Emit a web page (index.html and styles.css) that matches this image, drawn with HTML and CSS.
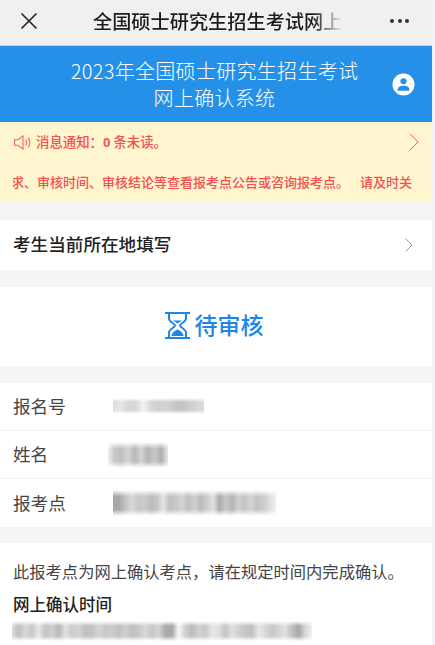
FILE: index.html
```html
<!DOCTYPE html>
<html lang="zh-CN">
<head>
<meta charset="utf-8">
<title>网上确认系统</title>
<link rel="stylesheet" href="styles.css">
</head>
<body>
<div class="page">
  <header class="topbar">
    <svg class="close" viewBox="0 0 18 18" width="18" height="18"><path d="M1.500 1.500 16.500 16.500M16.500 1.500 1.500 16.500" fill="none" stroke="#222" stroke-width="1.600"/></svg>
    <div class="toptitle">全国硕士研究生招生考试网上确认系统</div>
    <div class="dots"><i></i><i></i><i></i></div>
  </header>
  <section class="banner">
    <h1>2023年全国硕士研究生招生考试<br>网上确认系统</h1>
    <svg class="user" viewBox="0 0 24 24" width="23" height="23"><circle cx="12" cy="12" r="11.500" fill="#fff"/><circle cx="12" cy="8.600" r="3.200" fill="#2490e8"/><path d="M5.800 17.600c0-3 2.600-4.400 6.200-4.400s6.200 1.400 6.200 4.400c0 .7-.5 1-1.200 1H7c-.7 0-1.200-.3-1.200-1z" fill="#2490e8"/></svg>
  </section>
  <section class="notice">
    <div class="notice-top">
      <svg class="speaker" viewBox="0 0 20 16" width="20" height="15"><path d="M1 5h3.500L10 1v14L4.500 11H1z" fill="none" stroke="#f4605a" stroke-width="1.100"/><path d="M13 5c1.200 1.800 1.200 4.200 0 6M15.500 2.800c2.200 3.200 2.200 7.200 0 10.400" fill="none" stroke="#f4605a" stroke-width="1.100"/></svg>
      <span class="notice-text">消息通知：<b>0</b> 条未读。</span>
      <svg class="notice-arrow" viewBox="0 0 10 18" width="10" height="18"><path d="M1 .8 9 9 1 17.200" fill="none" stroke="#f4605a" stroke-width="1"/></svg>
    </div>
    <div class="marquee"><span>求、审核时间、审核结论等查看报考点公告或咨询报考点。 请及时关注</span></div>
  </section>
  <a class="row-link">
    <span>考生当前所在地填写</span>
    <svg viewBox="0 0 8 14" width="8" height="14"><path d="M.7.7 7 7 .7 13.300" fill="none" stroke="#999" stroke-width="1"/></svg>
  </a>
  <section class="status">
    <svg viewBox="0 0 25 27" width="25" height="27"><path d="M0 1h25M0 26h25" stroke="#1c87e5" stroke-width="1.800"/><path d="M4 1v5.500c0 3.500 6 5 6 7s-6 3.500-6 7V26M21 1v5.500c0 3.500-6 5-6 7s6 3.500 6 7V26" fill="none" stroke="#1c87e5" stroke-width="2"/><path d="M8 8.500h9l-4.500 3z" fill="#1c87e5"/><path d="M6.500 24c0-3 3.500-5.500 6-6.500 2.500 1 6 3.500 6 6.500z" fill="#1c87e5"/></svg>
    <span>待审核</span>
  </section>
  <section class="info">
    <div class="info-row"><span class="label">报名号</span><i class="mask mask-a"></i></div>
    <div class="info-row"><span class="label">姓名</span><i class="mask mask-b"></i></div>
    <div class="info-row"><span class="label">报考点</span><i class="mask mask-c"></i></div>
  </section>
  <section class="confirm">
    <p>此报考点为网上确认考点，请在规定时间内完成确认。</p>
    <h2>网上确认时间</h2>
    <i class="mask mask-d"></i>
  </section>
</div>
</body>
</html>
```
FILE: styles.css
```css
* { box-sizing: border-box; }
html, body { margin: 0; padding: 0; height: 100%; overflow: hidden; }
body { background: #f0f4fa; font-family: "Noto Sans CJK SC", "Noto Sans", sans-serif; }
.page { width: 432px; height: 645px; background: #f6f5f6; overflow: hidden; }

.topbar { height: 46px; background: #f0f0f0; border-bottom: 1px solid #c9d5df; display: flex; align-items: center; padding-left: 20px; }
.close { flex: none; margin-top: -4px; }
.toptitle { margin-left: 55px; width: 250px; white-space: nowrap; overflow: hidden; font-size: 19.200px; font-weight: 500; color: #1c1c1c; line-height: 26px; margin-top: -3px; -webkit-mask-image: linear-gradient(to right, #000 88%, transparent); mask-image: linear-gradient(to right, #000 88%, transparent); }
.dots { display: flex; gap: 3.500px; margin-left: 47px; margin-top: -3px; }
.dots i { width: 4px; height: 4px; border-radius: 50%; background: #333; }

.banner { height: 76px; background: #2490e8; display: flex; align-items: center; padding-left: 37px; padding-right: 17px; }
.banner h1 { flex: 1; margin: -1px 0 0; font-size: 20px; line-height: 27px; font-weight: 300; color: #fff; text-align: center; letter-spacing: .3px; }
.user { flex: none; }

.notice { height: 80px; background: #fff5cf; color: #f4504f; }
.notice-top { display: flex; align-items: center; height: 40px; padding: 0 14px 0 13px; }
.speaker { flex: none; }
.notice-text { margin-left: 3px; margin-top: -2px; font-size: 13.400px; font-weight: 500; flex: 1; }
.notice-text b { font-family: "Liberation Sans", sans-serif; font-weight: 700; }
.notice-arrow { flex: none; margin-right: -1px; }
.marquee { margin: 0 19px 0 13px; overflow: hidden; white-space: nowrap; font-size: 13px; font-weight: 500; line-height: 16px; padding-top: 12px; height: 40px; }
.marquee span { display: block; margin-left: -2px; word-spacing: 8px; }

.row-link { margin-top: 18px; height: 50px; background: #fff; display: flex; align-items: center; justify-content: space-between; padding: 0 19px 0 13px; color: #222; }
.row-link span { font-size: 17.600px; font-weight: 500; margin-top: -4px; }

.status { margin-top: 17px; height: 79px; background: #fff; display: flex; justify-content: center; align-items: center; gap: 5px; color: #1c87e5; padding-right: 4px; }
.status span { font-size: 23px; font-weight: 500; margin-top: -5px; }
.status svg { margin-top: -2px; }

.info { margin-top: 17px; background: #fff; }
.info-row { height: 48px; display: flex; align-items: center; padding-left: 13px; border-bottom: 1px solid #f0f0f0; }
.info-row:last-child { border-bottom: 0; }
.label { width: 100px; font-size: 17.600px; color: #444; margin-top: -2px; }

.mask { display: block; filter: blur(.6px); -webkit-mask-image: linear-gradient(to bottom, transparent, #000 25%, #000 75%, transparent); mask-image: linear-gradient(to bottom, transparent, #000 25%, #000 75%, transparent); }
.mask-a { width: 91px; height: 16px; margin-top: -2px; background-image: linear-gradient(90deg, #dcdcdc, #e8e8e8, #d6d6d6, #d8d8d8, #f4f4f4, #d8d8d8, #d0d0d0, #d4d4d4, #c8c8c8, #c4c4c4, #cccccc, #d4d4d4, #dcdcdc); }
.mask-b { width: 60px; height: 26px; margin-left: -5px; background-image: linear-gradient(90deg, #f0f0f0, #c8c8c8, #c0c0c0, #d4d4d4, #b8b8b8, #d4d4d4, #b4b4b4, #c8c8c8, #b0b0b0, #e8e8e8); }
.mask-c { width: 163px; height: 26px; background-image: linear-gradient(90deg, #a8a8a8, #a8a8a8, #c4c4c4, #d8d8d8, #c8c8c8, #cccccc, #bcbcbc, #c4c4c4, #e4e4e4, #c0c0c0, #c8c8c8, #d4d4d4, #c0c0c0, #d0d0d0, #bcbcbc, #cccccc, #e0e0e0, #acacac, #c8c8c8, #b4b4b4, #d0d0d0, #c4c4c4, #d4d4d4, #c4c4c4, #cccccc, #e0e0e0, #eeeeee); }
.mask-d { width: 300px; height: 20px; margin: 5px 0 0 -1px; background-image: linear-gradient(90deg, #dcdcdc, #c0c0c0, #d8d8d8, #c8c8c8, #e8e8e8, #c4c4c4, #d0d0d0, #b8b8b8, #e0e0e0, #cccccc, #d4d4d4, #c0c0c0, #c4c4c4, #d4d4d4, #c8c8c8, #cccccc, #c0c0c0, #d0d0d0, #c0c0c0, #c8c8c8, #d8d8d8, #c8c8c8, #d4d4d4, #acacac, #a8a8a8, #f8f8f8, #d0d0d0, #bcbcbc, #d0d0d0, #c8c8c8, #e4e4e4, #e0e0e0, #c4c4c4, #e0e0e0, #d0d0d0, #c4c4c4, #c0c0c0, #e8e8e8, #d8d8d8, #c8c8c8, #d4d4d4, #e0e0e0, #c0c0c0, #a8a8a8, #d8d8d8, #f0f0f0); }

.confirm { margin-top: 16px; background: #fff; padding: 16px 13px 0; height: 110px; }
.confirm p { margin: 0; font-size: 16.300px; line-height: 24px; color: #444; white-space: nowrap; }
.confirm h2 { margin: 9px 0 0; font-size: 16.500px; line-height: 24px; font-weight: 500; color: #222; }
```
